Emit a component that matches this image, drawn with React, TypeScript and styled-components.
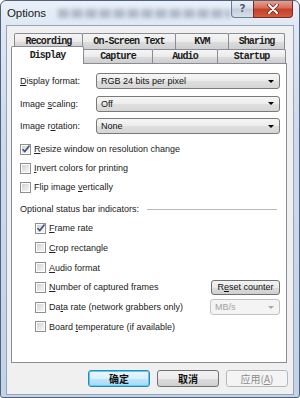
import React from "react";
import styled, { createGlobalStyle } from "styled-components";

const Global = createGlobalStyle`
  html, body { margin: 0; padding: 0; background: #ffffff; }
  body { font-family: "Liberation Sans", Arial, sans-serif; }
  * { box-sizing: border-box; }
`;

const Window = styled.div`
  width: 300px;
  height: 398px;
  display: flex;
  flex-direction: column;
  border: 1px solid #4f6279;
  border-radius: 6px 6px 3px 3px;
  overflow: hidden;
  background: linear-gradient(180deg, #e9f0f9 0px, #dfe8f4 24px, #cddbec 120px, #c2d3e7 100%);
`;

const TitleBar = styled.div`
  height: 25px;
  display: flex;
  align-items: flex-start;
  padding-left: 6px;
`;

const Title = styled.div`
  font-family: "Liberation Sans", Arial, sans-serif;
  font-size: 11.5px;
  color: #1b1b1b;
  margin-top: 6px;
  letter-spacing: -0.1px;
`;

const Blur = styled.div`
  width: 172px;
  height: 9px;
  margin: 8px 0 0 12px;
  filter: blur(2px);
  background: repeating-linear-gradient(
    90deg,
    rgba(95, 110, 130, 0.4) 0 10px,
    rgba(95, 110, 130, 0.12) 10px 14px
  );
`;

const Captions = styled.div`
  display: flex;
  margin-left: auto;
  margin-right: 6px;
  margin-top: -1px;
`;

const CapButton = styled.div<{ $close?: boolean }>`
  width: ${(p) => (p.$close ? 40 : 23)}px;
  height: 18px;
  display: flex;
  align-items: center;
  justify-content: center;
  border: 1px solid ${(p) => (p.$close ? "#7a2a22" : "#6d7d92")};
  border-top: none;
  border-radius: ${(p) => (p.$close ? "0 0 4px 0" : "0 0 0 4px")};
  margin-left: ${(p) => (p.$close ? "-1px" : "0")};
  background: ${(p) =>
    p.$close
      ? "linear-gradient(180deg, #e8a595 0%, #d86f5c 45%, #c4402b 55%, #d35a3e 100%)"
      : "linear-gradient(180deg, #eef2f7 0%, #d8e0ea 45%, #c2cedd 55%, #d6e0ec 100%)"};
  color: #4c5c72;
  font-family: "DejaVu Sans", sans-serif;
  font-weight: bold;
  font-size: 11px;
  text-shadow: 0 0 1px #ffffff;
`;

const Client = styled.div`
  margin-left: 6px;
  width: 286px;
  height: 368px;
  background: #f0f0f0;
  box-shadow: 0 0 0 1px #93a5bb;
  display: flex;
  flex-direction: column;
`;

const TabStrip = styled.div`
  display: flex;
  flex-direction: column;
  padding-top: 7px;
`;

const TabRow = styled.div<{ $indent: number; $h: number }>`
  display: flex;
  align-items: flex-end;
  margin-left: ${(p) => p.$indent}px;
  height: ${(p) => p.$h}px;
`;

const Tab = styled.div<{ $w: number; $active?: boolean; $h: number }>`
  position: relative;
  z-index: ${(p) => (p.$active ? 2 : 0)};
  width: ${(p) => p.$w}px;
  height: ${(p) => p.$h}px;
  margin-right: -1px;
  margin-bottom: ${(p) => (p.$active ? -1 : 0)}px;
  border: 1px solid #898c95;
  border-bottom: none;
  border-radius: 2px 2px 0 0;
  background: ${(p) =>
    p.$active
      ? "#ffffff"
      : "linear-gradient(180deg, #f5f5f5 0%, #ebebeb 50%, #dddddd 51%, #cfcfcf 100%)"};
  display: flex;
  align-items: center;
  justify-content: center;
  font-family: "Liberation Mono", "DejaVu Sans Mono", monospace;
  font-weight: bold;
  font-size: 10px;
  letter-spacing: -0.9px;
  color: #1c1c1c;
  padding-bottom: ${(p) => (p.$active ? 1 : 0)}px;
`;

const Panel = styled.div`
  position: relative;
  z-index: 1;
  margin-left: 4px;
  width: 276px;
  height: 300px;
  border: 1px solid #898c95;
  background: #ffffff;
  padding: 9px 6px 0 8px;
  display: flex;
  flex-direction: column;
  font-size: 9px;
  color: #222222;
`;

const FormGrid = styled.div`
  display: grid;
  grid-template-columns: 76px 1fr;
  row-gap: 6.5px;
  align-items: center;
`;

const Label = styled.div`
  white-space: nowrap;
`;

const Combo = styled.div<{ $disabled?: boolean; $w?: number }>`
  height: 16px;
  width: ${(p) => (p.$w ? `${p.$w}px` : "auto")};
  border: 1px solid ${(p) => (p.$disabled ? "#c3c3c3" : "#7a7a7a")};
  border-radius: 3px;
  background: ${(p) =>
    p.$disabled
      ? "#f4f4f4"
      : "linear-gradient(180deg, #f6f6f6 0%, #ececec 50%, #dfdfdf 51%, #d6d6d6 100%)"};
  display: flex;
  align-items: center;
  padding-left: 4px;
  color: ${(p) => (p.$disabled ? "#a3a3a3" : "#111111")};
  white-space: nowrap;
`;

const Arrow = styled.span<{ $disabled?: boolean }>`
  margin-left: auto;
  margin-right: 5px;
  width: 0;
  height: 0;
  border-left: 3px solid transparent;
  border-right: 3px solid transparent;
  border-top: 3px solid ${(p) => (p.$disabled ? "#a8a8a8" : "#000000")};
`;

const CheckList = styled.div<{ $top: number; $indent?: number; $gap: number }>`
  display: flex;
  flex-direction: column;
  gap: ${(p) => p.$gap}px;
  margin-top: ${(p) => p.$top}px;
  margin-left: ${(p) => p.$indent ?? 0}px;
`;

const CheckRow = styled.div`
  height: 10px;
  display: flex;
  align-items: center;
  white-space: nowrap;
`;

const Box = styled.span`
  width: 11px;
  height: 11px;
  flex: none;
  border: 1px solid #8e8f8f;
  background: #ffffff;
  padding: 1px;
  display: flex;
  margin-right: 3px;
`;

const BoxInner = styled.span`
  flex: 1;
  background: linear-gradient(135deg, #d4d4d4 0%, #e8e8e8 60%, #f6f6f6 100%);
  display: flex;
  align-items: center;
  justify-content: center;
  position: relative;
`;

const CheckMark = styled.svg`
  position: absolute;
  left: -1px;
  top: -2px;
`;

const Right = styled.div`
  margin-left: auto;
  display: flex;
`;

const SmallButton = styled.div`
  width: 69px;
  height: 15px;
  border: 1px solid #707070;
  border-radius: 3px;
  background: linear-gradient(180deg, #f2f2f2 0%, #ebebeb 50%, #dddddd 51%, #cfcfcf 100%);
  display: flex;
  align-items: center;
  justify-content: center;
  color: #111111;
`;

const GroupHeader = styled.div`
  display: flex;
  align-items: center;
  height: 12px;
  margin-top: 11px;
  padding-right: 3px;
`;

const GroupLine = styled.div`
  flex: 1;
  height: 1px;
  margin-left: 8px;
  background: #b8b8b8;
`;

const ButtonBar = styled.div`
  display: flex;
  justify-content: flex-end;
  gap: 7px;
  padding-right: 5px;
  margin-top: 7px;
`;

const DlgButton = styled.div<{ $default?: boolean; $disabled?: boolean }>`
  width: 62px;
  height: 17px;
  border-radius: 3px;
  border: 1px solid
    ${(p) => (p.$default ? "#3c7fb1" : p.$disabled ? "#b5b9bc" : "#707070")};
  box-shadow: ${(p) => (p.$default ? "inset 0 0 0 1px #48d2f7" : "none")};
  background: ${(p) =>
    p.$disabled
      ? "#f4f4f4"
      : p.$default
      ? "linear-gradient(180deg, #eaf6fd 0%, #d9f0fc 50%, #bee6fd 51%, #a7d9f5 100%)"
      : "linear-gradient(180deg, #f2f2f2 0%, #ebebeb 50%, #dddddd 51%, #cfcfcf 100%)"};
  display: flex;
  align-items: center;
  justify-content: center;
  font-family: "Noto Sans CJK SC", "Liberation Sans", sans-serif;
  font-size: 10px;
  font-weight: ${(p) => (p.$disabled ? 400 : 700)};
  color: ${(p) => (p.$disabled ? "#8d8d8d" : "#111111")};
`;

function Check({ checked, children, right }: { checked?: boolean; children: React.ReactNode; right?: React.ReactNode }) {
  return (
    <CheckRow>
      <Box>
        <BoxInner>
          {checked && (
            <CheckMark width="10" height="10" viewBox="0 0 10 10">
              <path d="M1.5 5.2 L3.8 7.6 L8.5 1.5" fill="none" stroke="#3a4f86" strokeWidth="1.6" />
            </CheckMark>
          )}
        </BoxInner>
      </Box>
      <span>{children}</span>
      {right && <Right>{right}</Right>}
    </CheckRow>
  );
}

function Select({ value }: { value: string }) {
  return (
    <Combo>
      {value}
      <Arrow />
    </Combo>
  );
}

function CloseGlyph() {
  return (
    <svg width="12" height="10" viewBox="0 0 12 10">
      <path d="M2 1 L10 9 M10 1 L2 9" stroke="#7a2418" strokeWidth="3.6" strokeLinecap="round" />
      <path d="M2 1 L10 9 M10 1 L2 9" stroke="#ffffff" strokeWidth="2" strokeLinecap="round" />
    </svg>
  );
}

export default function App() {
  return (
    <>
      <Global />
      <Window>
        <TitleBar>
          <Title>Options</Title>
          <Blur />
          <Captions>
            <CapButton>?</CapButton>
            <CapButton $close>
              <CloseGlyph />
            </CapButton>
          </Captions>
        </TitleBar>
        <Client>
          <TabStrip>
            <TabRow $indent={7} $h={16}>
              <Tab $w={69} $h={16}>Recording</Tab>
              <Tab $w={94} $h={16}>On-Screen Text</Tab>
              <Tab $w={54} $h={16}>KVM</Tab>
              <Tab $w={57} $h={16}>Sharing</Tab>
            </TabRow>
            <TabRow $indent={4} $h={14}>
              <Tab $w={73} $h={18} $active>Display</Tab>
              <Tab $w={70} $h={14}>Capture</Tab>
              <Tab $w={66} $h={14}>Audio</Tab>
              <Tab $w={69} $h={14}>Startup</Tab>
            </TabRow>
          </TabStrip>
          <Panel>
            <FormGrid>
              <Label><u>D</u>isplay format:</Label>
              <Select value="RGB 24 bits per pixel" />
              <Label>Image <u>s</u>caling:</Label>
              <Select value="Off" />
              <Label>Image r<u>o</u>tation:</Label>
              <Select value="None" />
            </FormGrid>
            <CheckList $top={10} $gap={9}>
              <Check checked><u>R</u>esize window on resolution change</Check>
              <Check><u>I</u>nvert colors for printing</Check>
              <Check>Flip image <u>v</u>ertically</Check>
            </CheckList>
            <GroupHeader>
              <span>Optional status bar indicators:</span>
              <GroupLine />
            </GroupHeader>
            <CheckList $top={8} $indent={15} $gap={9.8}>
              <Check checked><u>F</u>rame rate</Check>
              <Check><u>C</u>rop rectangle</Check>
              <Check><u>A</u>udio format</Check>
              <Check right={<SmallButton>R<u>e</u>set counter</SmallButton>}>
                <u>N</u>umber of captured frames
              </Check>
              <Check
                right={
                  <Combo $disabled $w={70}>
                    MB/s
                    <Arrow $disabled />
                  </Combo>
                }
              >
                Da<u>t</u>a rate (network grabbers only)
              </Check>
              <Check>Board <u>t</u>emperature (if available)</Check>
            </CheckList>
          </Panel>
          <ButtonBar>
            <DlgButton $default>确定</DlgButton>
            <DlgButton>取消</DlgButton>
            <DlgButton $disabled>应用(<u>A</u>)</DlgButton>
          </ButtonBar>
        </Client>
      </Window>
    </>
  );
}
